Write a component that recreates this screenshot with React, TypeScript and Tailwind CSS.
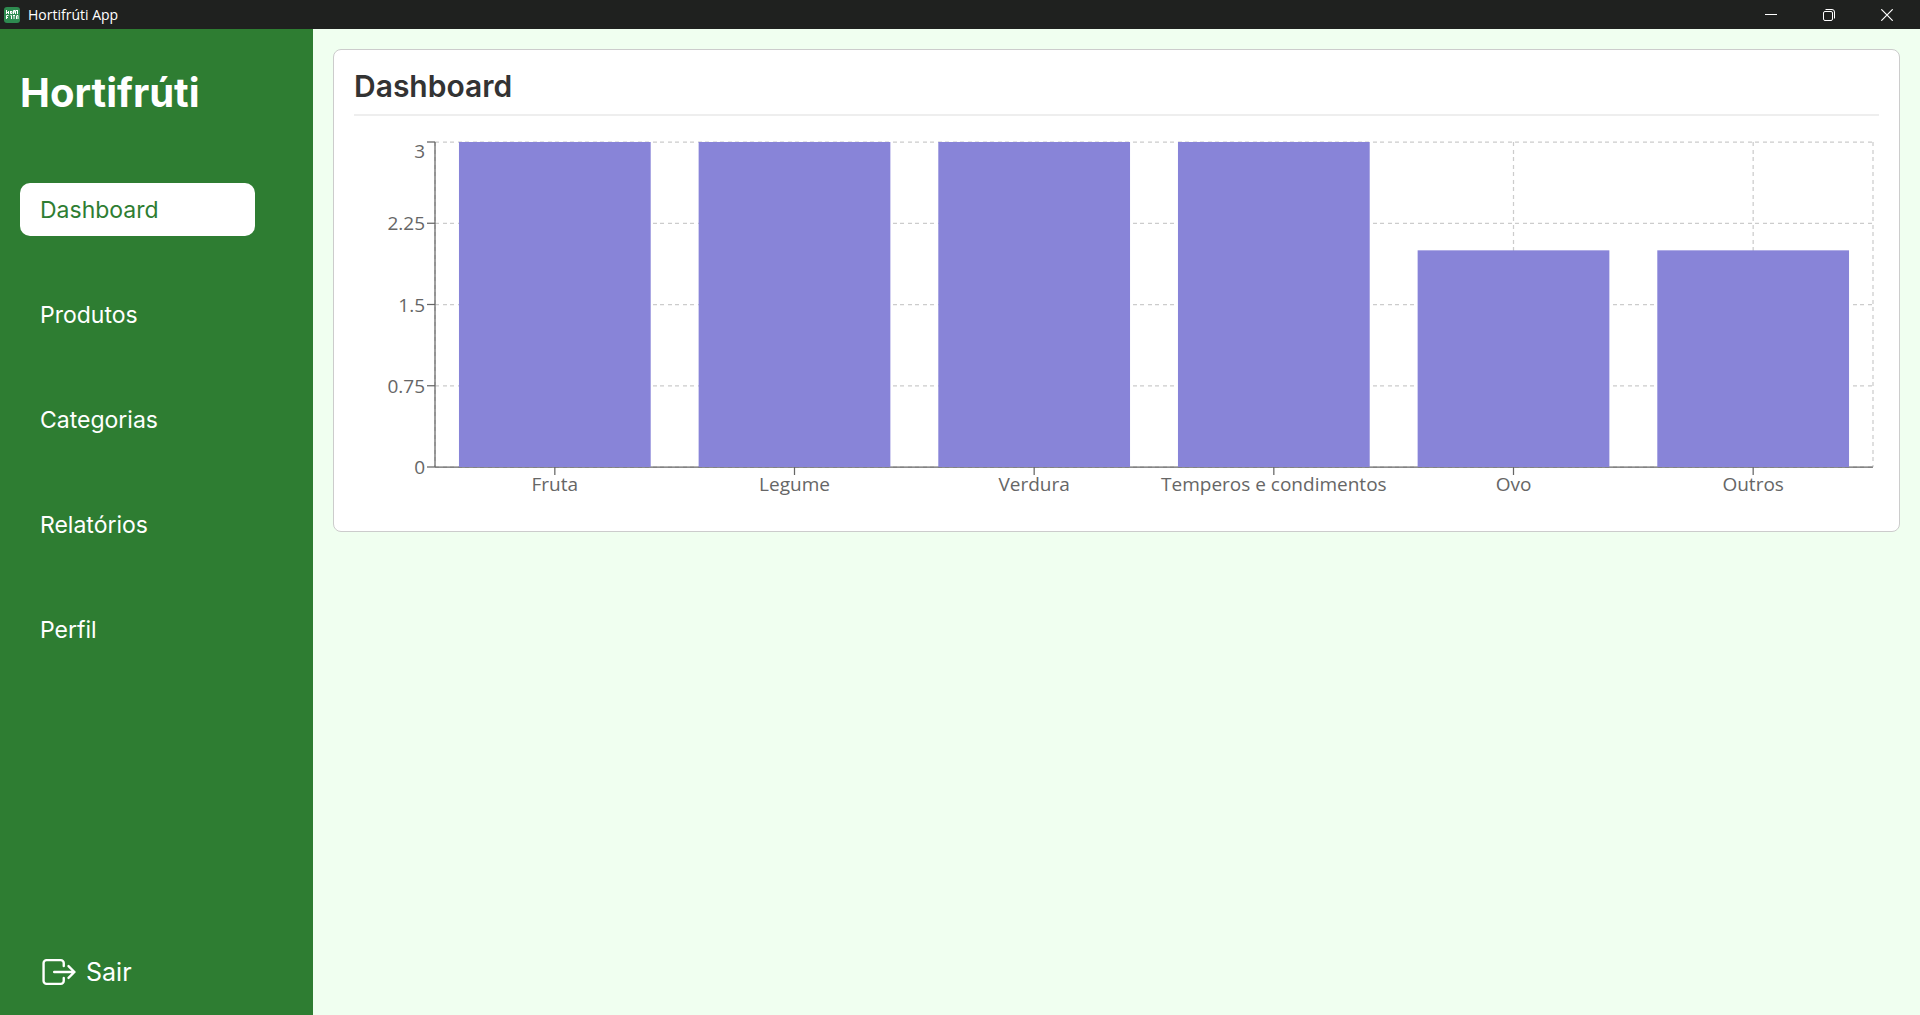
import { useLayoutEffect, useRef, useState } from 'react';
import { IoExitOutline } from 'react-icons/io5';

const navItems = ['Dashboard', 'Produtos', 'Categorias', 'Relatórios', 'Perfil'];

const categories = [
  { name: 'Fruta', value: 3 },
  { name: 'Legume', value: 3 },
  { name: 'Verdura', value: 3 },
  { name: 'Temperos e condimentos', value: 3 },
  { name: 'Ovo', value: 2 },
  { name: 'Outros', value: 2 },
];

const ticks = [0, 0.75, 1.5, 2.25, 3];

function AppIcon() {
  return (
    <svg width="16" height="16" viewBox="0 0 16 16" aria-hidden="true">
      <rect width="16" height="16" rx="3" fill="#2e8b50" />
      <g stroke="#fff" strokeWidth="1" fill="none">
        <path d="M2.5 3v4M2.5 5.5h2M4.5 4v3M6.5 4v2.5h1.5V4.5H6.5M9.5 7V3.5h1.5v1.5H9.5M12 3.5h2M13.5 3.5V7M11.5 3.5V7" />
        <path d="M2.5 12V8.5h2M2.5 10.5h1.5M6.5 8.5h1V12M9 8.5h2M10 8.5V12M12.5 8.5h1.5V12M12.5 9v3" />
      </g>
    </svg>
  );
}

function TitleBar() {
  const control = 'flex h-full w-[58px] items-center justify-center';
  return (
    <header className="flex h-[29px] shrink-0 items-center justify-between bg-[#1f211f] pl-1 text-white">
      <div className="flex items-center gap-2">
        <AppIcon />
        <span className="font-['Open_Sans',sans-serif] text-[14px] leading-5">Hortifrúti App</span>
      </div>
      <div className="flex h-full pr-1">
        <button type="button" aria-label="Minimizar" className={control}>
          <svg width="12" height="12" viewBox="0 0 12 12" stroke="currentColor">
            <path d="M0 5.5h12" />
          </svg>
        </button>
        <button type="button" aria-label="Restaurar" className={control}>
          <svg width="12" height="12" viewBox="0 0 12 12" fill="none" stroke="currentColor">
            <rect x="0.5" y="2.5" width="9" height="9" rx="1.5" />
            <path d="M2.5 0.5H9a2.5 2.5 0 0 1 2.5 2.5v6.5" />
          </svg>
        </button>
        <button type="button" aria-label="Fechar" className={control}>
          <svg width="12" height="12" viewBox="0 0 12 12" stroke="currentColor" strokeWidth="1.2">
            <path d="M0.3 0.3l11.4 11.4M11.7 0.3L0.3 11.7" />
          </svg>
        </button>
      </div>
    </header>
  );
}

function Sidebar() {
  return (
    <aside className="flex w-[313px] shrink-0 flex-col bg-[#2e7d32] px-5 pt-9 pb-5 text-white">
      <h1 className="text-[40px] leading-[56px] font-bold">Hortifrúti</h1>
      <nav className="mt-[62px] flex flex-col gap-[52px]">
        {navItems.map((item, i) => (
          <a
            key={item}
            href={'#' + item.toLowerCase()}
            aria-current={i === 0 ? 'page' : undefined}
            className={
              i === 0
                ? 'mr-[38px] rounded-[10px] bg-white px-5 pt-[11px] pb-[9px] text-[23px] leading-[33px] text-[#2e7d32]'
                : 'mr-[38px] rounded-[10px] px-5 pt-[11px] pb-[9px] text-[23px] leading-[33px]'
            }
          >
            {item}
          </a>
        ))}
      </nav>
      <button type="button" className="mt-auto flex items-center gap-2 px-5 text-[25px] leading-[46px]">
        <IoExitOutline size={38} />
        Sair
      </button>
    </aside>
  );
}

function BarChart() {
  const holder = useRef<HTMLDivElement>(null);
  const [width, setWidth] = useState(0);

  useLayoutEffect(() => {
    const node = holder.current;
    if (!node) return;
    const measure = () => setWidth(node.clientWidth);
    measure();
    const observer = new ResizeObserver(measure);
    observer.observe(node);
    return () => observer.disconnect();
  }, []);

  const left = 81;
  const right = Math.max(width - 6, left);
  const top = 6;
  const bottom = 331;
  const band = (right - left) / categories.length;
  const y = (v: number) => bottom - (v / 3) * (bottom - top);
  const center = (i: number) => left + band * (i + 0.5);

  return (
    <div ref={holder} className="h-[375px] w-full overflow-hidden">
      <svg width={width} height="375" role="img" aria-label="Produtos por categoria">
        <g stroke="#ccc" strokeWidth="1.25" strokeDasharray="4 4 4 3">
          {ticks.map((t) => (
            <path key={t} d={`M${left} ${y(t)}H${right}`} />
          ))}
          {categories.map((c, i) => (
            <path key={c.name} d={`M${center(i)} ${top}V${bottom}`} />
          ))}
          <path d={`M${left} ${top}V${bottom}`} />
          <path d={`M${right} ${top}V${bottom}`} />
        </g>
        <g stroke="#666" strokeWidth="1.25">
          <path d={`M${left} ${bottom}H${right}`} />
          <path d={`M${left} ${top}V${bottom}`} />
          {ticks.map((t) => (
            <path key={t} d={`M${left - 8} ${y(t)}H${left}`} />
          ))}
          {categories.map((c, i) => (
            <path key={c.name} d={`M${center(i)} ${bottom}v8`} />
          ))}
        </g>
        <g fill="#8884d8">
          {categories.map((c, i) => (
            <rect
              key={c.name}
              x={left + band * (i + 0.1)}
              y={y(c.value)}
              width={band * 0.8}
              height={bottom - y(c.value)}
            />
          ))}
        </g>
        <g fill="#666" className="font-['Open_Sans',sans-serif] text-[19px]">
          {ticks.map((t) => (
            <text key={t} x={left - 10} y={t === 3 ? 22 : y(t) + 7} textAnchor="end">
              {t}
            </text>
          ))}
          {categories.map((c, i) => (
            <text key={c.name} x={center(i)} y={bottom + 24} textAnchor="middle">
              {c.name}
            </text>
          ))}
        </g>
      </svg>
    </div>
  );
}

export default function App() {
  return (
    <div className="flex min-h-screen flex-col font-['Inter',sans-serif]">
      <TitleBar />
      <div className="flex flex-1">
        <Sidebar />
        <main className="min-w-0 flex-1 bg-[#f0fff0] p-5">
          <section className="rounded-lg border border-[#ccc] bg-white p-5">
            <h2 className="mb-5 border-b-2 border-[#eee] pb-3 text-[30px] leading-8 font-semibold text-[#333]">
              Dashboard
            </h2>
            <BarChart />
          </section>
        </main>
      </div>
    </div>
  );
}
